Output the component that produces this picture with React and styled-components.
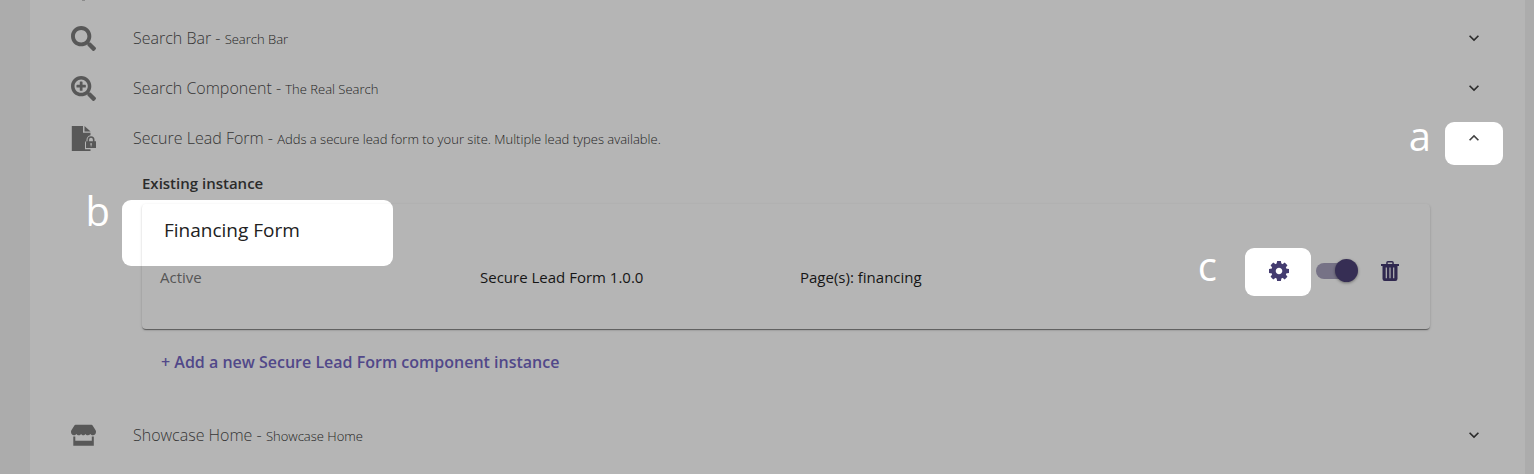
import React, { useState } from "react";
import styled, { createGlobalStyle, css } from "styled-components";
import { FaSearch, FaSearchPlus } from "react-icons/fa";
import { MdExpandMore } from "react-icons/md";

const GlobalStyle = createGlobalStyle`
  * {
    box-sizing: border-box;
  }

  body {
    margin: 0;
    background: #acacac;
    font-family: "Open Sans", sans-serif;
    overflow: hidden;
  }
`;

const Panel = styled.main`
  min-height: 100vh;
  margin: 0 9px 0 30px;
  background: #b5b5b5;
`;

const PreviousRow = styled.div`
  height: 13px;
  padding-left: 52px;

  &::before {
    content: "";
    display: block;
    width: 3px;
    height: 1px;
    background: #8c8c8c;
  }
`;

const Row = styled.div`
  display: grid;
  grid-template-columns: 62px 1fr 20px;
  align-items: center;
  height: 50px;
  padding: 0 41px;
`;

const RowIcon = styled.span`
  display: flex;
  color: #585858;

  svg {
    width: 25px;
    height: 25px;
  }
`;

const RowTitle = styled.h2`
  margin: 0;
  font-size: 16px;
  font-weight: 300;
  line-height: 24px;
  color: #363636;
`;

const RowDescription = styled.small`
  font-size: 13px;
  color: #1f1f1f;
`;

const IconButton = styled.button`
  position: relative;
  z-index: 0;
  display: flex;
  padding: 0;
  border: 0;
  background: none;
  color: ${({ $color }) => $color || "#2b2b2b"};
  cursor: pointer;
`;

const Chevron = styled(MdExpandMore)`
  width: 20px;
  height: 20px;
  transform: ${({ $open }) => ($open ? "rotate(180deg)" : "none")};
`;

const placements = {
  a: css`
    top: -6px;
    left: -19px;
    width: 58px;
    height: 43px;
  `,
  b: css`
    top: -4px;
    left: -20px;
    width: 271px;
    height: 66px;
  `,
  c: css`
    top: -13px;
    left: -24px;
    width: 66px;
    height: 48px;
  `,
};

const Highlight = styled.span`
  position: absolute;
  z-index: -1;
  border-radius: 9px;
  background: #fff;
  ${({ $name }) => placements[$name]}
`;

const Letter = styled.span`
  position: absolute;
  right: 100%;
  top: ${({ $top }) => $top}px;
  margin-right: ${({ $gap }) => $gap}px;
  color: #fff;
  font: 400 40px/40px "Open Sans", sans-serif;
`;

const RowBody = styled.section`
  padding: 8px 95px 36px 112px;
`;

const BodyTitle = styled.h3`
  margin: 0 0 9px;
  font-size: 15px;
  font-weight: 600;
  line-height: 24px;
  color: #2b2b2b;
`;

const CardWrap = styled.div`
  position: relative;
  z-index: 0;
`;

const Card = styled.article`
  padding: 12px 4px 31px;
  border-radius: 4px;
  box-shadow: 0 2px 1px -1px rgba(0, 0, 0, 0.3),
    0 1px 1px 0 rgba(0, 0, 0, 0.2), 0 1px 3px 0 rgba(0, 0, 0, 0.14);
`;

const CardTitle = styled.h4`
  margin: 0;
  padding-left: 18px;
  font-size: 19px;
  font-weight: 400;
  line-height: 28px;
  color: #212121;
`;

const Details = styled.div`
  display: grid;
  grid-template-columns: repeat(4, 1fr);
  align-items: center;
  height: 54px;
`;

const Detail = styled.span`
  padding: 12px 14px 0;
  font-size: 15px;
  line-height: 24px;
  color: ${({ $muted }) => ($muted ? "#565656" : "#151515")};
`;

const Controls = styled.div`
  display: flex;
  justify-content: flex-end;
  align-items: center;
  padding-right: 27px;
`;

const Switch = styled.input`
  appearance: none;
  position: relative;
  width: 42px;
  height: 24px;
  margin: 0 23px 0 27px;
  cursor: pointer;

  &::before {
    content: "";
    position: absolute;
    top: 4px;
    left: 0;
    width: 38px;
    height: 16px;
    border-radius: 8px;
    background: #767286;
  }

  &::after {
    content: "";
    position: absolute;
    top: 0;
    left: 0;
    width: 23px;
    height: 23px;
    border-radius: 50%;
    background: #8f8f8f;
    box-shadow: 0 1px 3px rgba(0, 0, 0, 0.4);
  }

  &:checked::after {
    left: 19px;
    background: #362e54;
  }
`;

const AddLink = styled.a`
  display: inline-block;
  margin: 21px 0 0 19px;
  font-size: 16px;
  font-weight: 600;
  line-height: 24px;
  color: #514889;
  text-decoration: none;
`;

function FileLockIcon() {
  return (
    <svg viewBox="0 0 25 25" fill="currentColor">
      <path d="M.8 0H12v6.700h7.500v2.600c-2.400.5-4 2.300-4 4.700v.8c-1 .4-1.500 1.200-1.500 2.200v6.200h5.500V25H.8Z" />
      <path d="M13.500 0 19.600 5.600h-6.100Z" />
      <path
        fillRule="evenodd"
        d="M16.500 15.200v-1.500a3.500 3.500 0 0 1 7 0v1.500H25V22H15v-6.800Zm1.600 0h3.800v-1.500a1.900 1.900 0 0 0-3.800 0Zm1.200 2v1.200l.4.400v1.600h.8v-1.600l.4-.4v-1.200Z"
      />
    </svg>
  );
}

function StoreIcon() {
  return (
    <svg viewBox="0 0 25 25" fill="currentColor">
      <path d="M4.500 1.800h16q.7 0 1.100.6l3 4.800q.4.700.4 1.500c0 2-1.200 3.600-3 3.600-1.200 0-2-.5-2.600-1.300-.8.900-1.700 1.300-2.600 1.300-1.100 0-1.900-.5-2.400-1.300-.5.800-1.200 1.300-2.100 1.300s-1.700-.5-2.200-1.300c-.6.800-1.300 1.300-2.300 1.300s-1.900-.5-2.400-1.300c-.7.8-1.500 1.300-2.500 1.300C1.200 12.300 0 10.700 0 8.700q0-.8.400-1.500l3-4.800q.4-.6 1.100-.6Z" />
      <path d="M2.300 13.600h2v4.200h16.500v-4.200h2v9.100H2.300Z" />
    </svg>
  );
}

function GearIcon() {
  return (
    <svg width="20" height="20" viewBox="-10 -10 20 20" fill="none">
      <circle r="5.500" stroke="currentColor" strokeWidth="4.400" />
      {[0, 45, 90, 135, 180, 225, 270, 315].map((angle) => (
        <path
          key={angle}
          d="M-2.500-6.500-1.900-10h3.800l.6 3.500Z"
          fill="currentColor"
          transform={`rotate(${angle})`}
        />
      ))}
    </svg>
  );
}

function TrashIcon() {
  return (
    <svg width="18" height="20" viewBox="0 0 18 20" fill="currentColor">
      <path
        fillRule="evenodd"
        d="M5.200 3V1.700Q5.200 0 7 0h4q1.800 0 1.800 1.700V3H18v2h-1.500v12.800q0 2.200-2.200 2.200H3.700q-2.200 0-2.200-2.200V5H0V3Zm1.500 0h4.600V1.500H6.700ZM4.700 6.500v10.700h1.200V6.500Zm3.700 0v10.700h1.200V6.500Zm3.700 0v10.700h1.200V6.500Z"
      />
    </svg>
  );
}

function ComponentRow({ icon, title, description, open, onToggle, callout }) {
  return (
    <Row>
      <RowIcon>{icon}</RowIcon>
      <RowTitle>
        {title} - <RowDescription>{description}</RowDescription>
      </RowTitle>
      <IconButton
        type="button"
        aria-label={`Toggle ${title}`}
        aria-expanded={Boolean(open)}
        onClick={onToggle}
        $color={callout ? "#424242" : undefined}
      >
        {callout && (
          <>
            <Highlight $name="a" />
            <Letter $top={-12} $gap={33}>a</Letter>
          </>
        )}
        <Chevron $open={open} />
      </IconButton>
    </Row>
  );
}

function Instance() {
  const [active, setActive] = useState(true);

  return (
    <CardWrap>
      <Highlight $name="b" />
      <Letter $top={-13} $gap={32}>b</Letter>
      <Card>
        <CardTitle>Financing Form</CardTitle>
        <Details>
          <Detail $muted>Active</Detail>
          <Detail>Secure Lead Form 1.0.0</Detail>
          <Detail>Page(s): financing</Detail>
          <Controls>
            <IconButton type="button" aria-label="Settings" $color="#443c70">
              <Highlight $name="c" />
              <Letter $top={-15} $gap={52}>c</Letter>
              <GearIcon />
            </IconButton>
            <Switch
              type="checkbox"
              aria-label="Active"
              checked={active}
              onChange={(e) => setActive(e.target.checked)}
            />
            <IconButton type="button" aria-label="Delete" $color="#30284f">
              <TrashIcon />
            </IconButton>
          </Controls>
        </Details>
      </Card>
    </CardWrap>
  );
}

export default function App() {
  const [open, setOpen] = useState(true);

  return (
    <>
      <GlobalStyle />
      <Panel>
        <PreviousRow />
        <ComponentRow icon={<FaSearch />} title="Search Bar" description="Search Bar" />
        <ComponentRow
          icon={<FaSearchPlus />}
          title="Search Component"
          description="The Real Search"
        />
        <ComponentRow
          icon={<FileLockIcon />}
          title="Secure Lead Form"
          description="Adds a secure lead form to your site. Multiple lead types available."
          open={open}
          onToggle={() => setOpen(!open)}
          callout
        />
        {open && (
          <RowBody>
            <BodyTitle>Existing instance</BodyTitle>
            <Instance />
            <AddLink href="#add">+ Add a new Secure Lead Form component instance</AddLink>
          </RowBody>
        )}
        <ComponentRow icon={<StoreIcon />} title="Showcase Home" description="Showcase Home" />
      </Panel>
    </>
  );
}
